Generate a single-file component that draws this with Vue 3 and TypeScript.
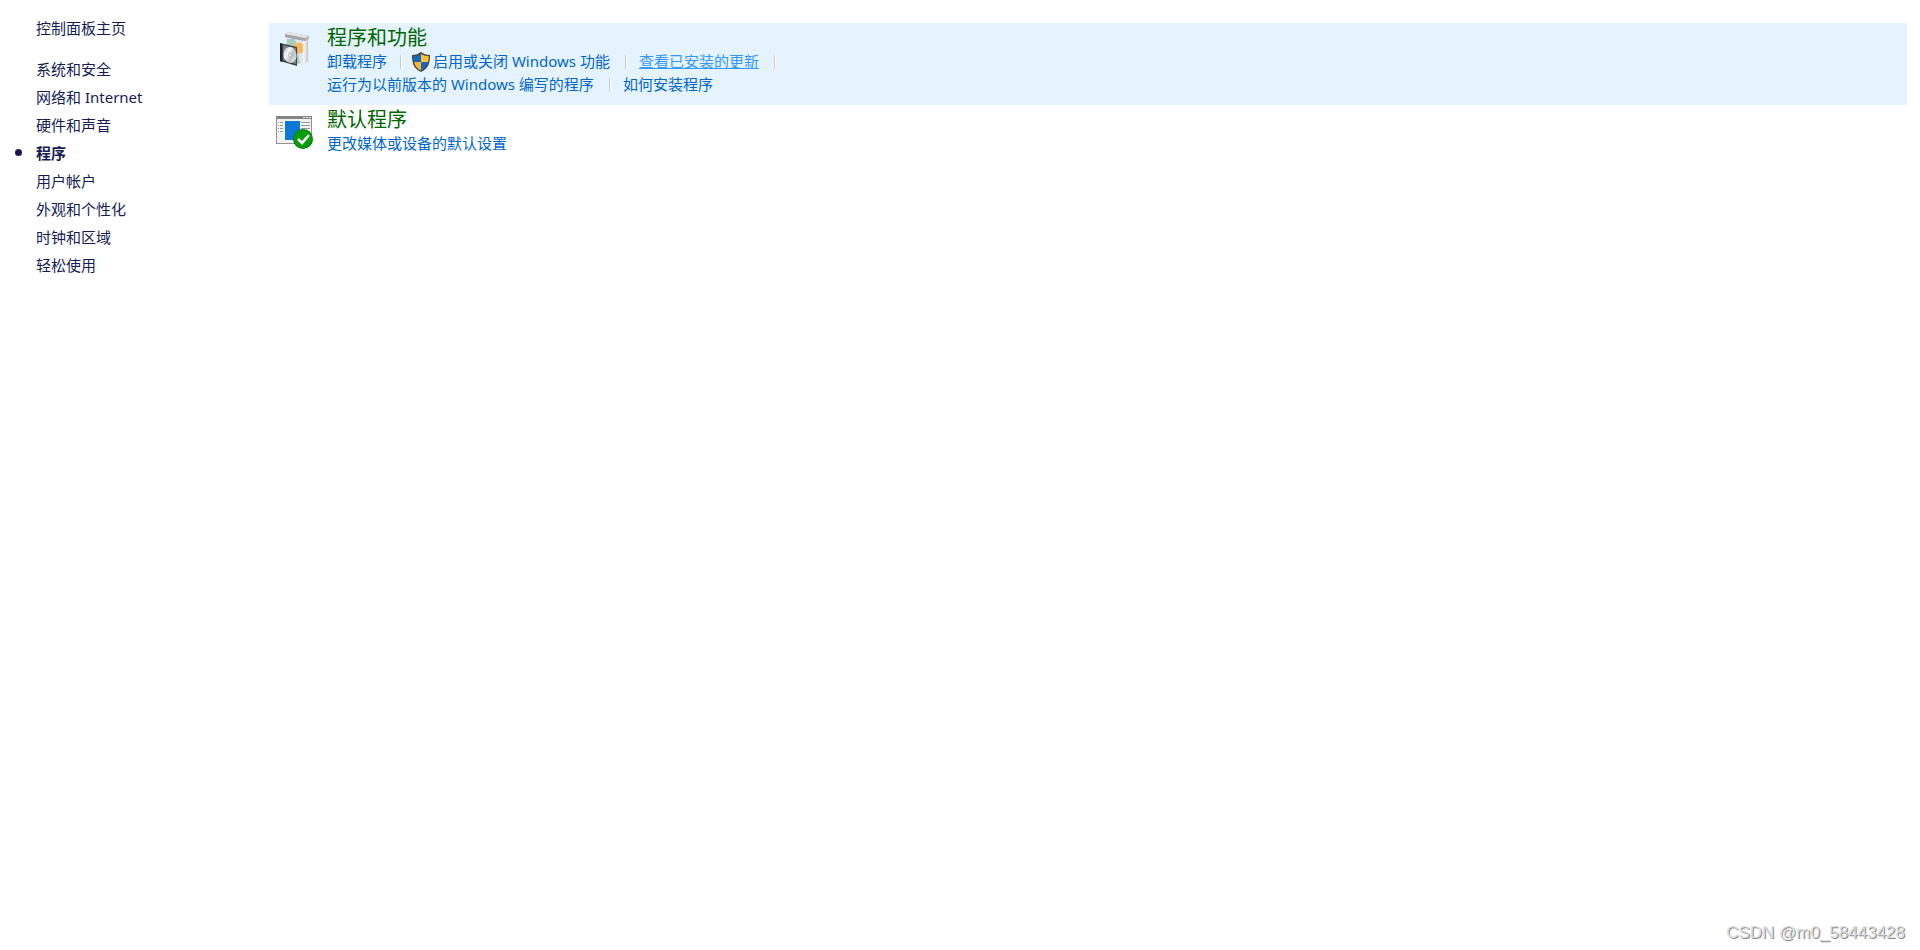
<script setup lang="ts">
interface Category {
  name: string
  current?: boolean
}

interface Task {
  name: string
  shield?: boolean
  hovered?: boolean
}

interface Group {
  title: string
  icon: 'box' | 'defaults'
  active?: boolean
  rows: Task[][]
}

const categories: Category[] = [
  { name: '系统和安全' },
  { name: '网络和 Internet' },
  { name: '硬件和声音' },
  { name: '程序', current: true },
  { name: '用户帐户' },
  { name: '外观和个性化' },
  { name: '时钟和区域' },
  { name: '轻松使用' },
]

const groups: Group[] = [
  {
    title: '程序和功能',
    icon: 'box',
    active: true,
    rows: [
      [
        { name: '卸载程序' },
        { name: '启用或关闭 Windows 功能', shield: true },
        { name: '查看已安装的更新', hovered: true },
      ],
      [{ name: '运行为以前版本的 Windows 编写的程序' }, { name: '如何安装程序' }],
    ],
  },
  {
    title: '默认程序',
    icon: 'defaults',
    rows: [[{ name: '更改媒体或设备的默认设置' }]],
  },
]

function hasDivider(group: Group, row: number, index: number): boolean {
  const lastInRow = index === group.rows[row].length - 1
  const lastRow = row === group.rows.length - 1
  return !(lastInRow && lastRow)
}
</script>

<template>
  <div class="page">
    <nav class="sidebar">
      <a class="home" href="#">控制面板主页</a>
      <ul class="categories">
        <li v-for="c in categories" :key="c.name" :class="{ current: c.current }">
          <a href="#">{{ c.name }}</a>
        </li>
      </ul>
    </nav>

    <main class="content">
      <section v-for="g in groups" :key="g.title" class="group" :class="{ active: g.active }">
        <svg v-if="g.icon === 'box'" class="icon" viewBox="0 0 40 40" aria-hidden="true">
          <defs>
            <linearGradient id="disc" x1="0" y1="0" x2="1" y2="1">
              <stop offset="0" stop-color="#b4b9bc" />
              <stop offset=".35" stop-color="#f4f5f6" />
              <stop offset=".6" stop-color="#bcc1c4" />
              <stop offset="1" stop-color="#f0f2f3" />
            </linearGradient>
            <linearGradient id="panel" x1="0" y1="0" x2="1" y2="0">
              <stop offset="0" stop-color="#fafafa" />
              <stop offset=".6" stop-color="#e2e2e2" />
              <stop offset="1" stop-color="#bdbdbd" />
            </linearGradient>
          </defs>
          <path d="M13 9 31 12v25l-18-4z" fill="#dfe7ec" />
          <path d="M14 11h8l5 24-4 1-9-3z" fill="#a9cdbb" />
          <circle cx="26" cy="20" r="5.500" fill="#f9b75c" />
          <path d="M30 12 35 11v22l-3 4-2-1z" fill="url(#panel)" />
          <path d="M12 6 16 4 36 8v3l-4 2-20-4z" fill="#b5b5b5" />
          <path d="M12 6 32 10v3L12 9z" fill="#a3a4a5" />
          <path d="M12 6 16 4 36 8l-4 2z" fill="#e6e6e6" />
          <path d="M7 15 24 19v19L7 33z" fill="#3a434b" />
          <path d="M10 17 23 20v16l-13-4z" fill="#79838a" />
          <ellipse cx="17" cy="27" rx="6.500" ry="8" fill="url(#disc)" transform="rotate(-12 17 27)" />
          <ellipse cx="17" cy="27" rx="1.500" ry="2" fill="#e9f0f4" stroke="#b4b9bc" />
          <path d="M7 15v18l2 1V16z" fill="#1d2226" />
        </svg>
        <svg v-else class="icon" viewBox="0 0 40 40" aria-hidden="true">
          <path d="M3 6h36v28H3z" fill="#929292" />
          <path d="M4 9h34v24H4z" fill="#f2f2f2" />
          <path d="M3 6h36v3H3z" fill="#858585" />
          <path d="M30 7h2v1h-2zm3 0h2v1h-2zm3 0h2v1h-2z" fill="#eee" />
          <path d="M12 11h15v19H12z" fill="#0b78d8" />
          <path
            d="M5 12.500h1m1 0h3M5 15.500h1m1 0h3M5 18.500h1m1 0h3M5 21.500h1m1 0h3M28 12.500h9M28 15.500h9M28 18.500h9M28 21.500h9"
            stroke="#999"
          />
          <circle cx="30" cy="29" r="10" fill="#087b0c" />
          <circle cx="30" cy="29" r="9" fill="#079d0b" />
          <path d="M25 29l4 4 7-8" fill="none" stroke="#fff" stroke-width="2.6" />
        </svg>

        <div class="body">
          <h2><a href="#">{{ g.title }}</a></h2>
          <div v-for="(row, r) in g.rows" :key="r" class="tasks">
            <template v-for="(t, i) in row" :key="t.name">
              <svg v-if="t.shield" class="shield" viewBox="0 0 20 20" aria-hidden="true">
                <path d="M10 0c3 2 5 3 9 3 0 8-1 13-9 17C2 16 1 11 1 3c4 0 6-1 9-3z" fill="#474747" />
                <path d="M10 2v8H3c-.6-2-.7-3.500-.7-5.700C5 4.200 7 3.500 10 2z" fill="#1568bd" />
                <path d="M10 2v8h7c.6-2 .7-3.500.7-5.700C15 4.200 13 3.500 10 2z" fill="#ffc12e" />
                <path d="M3 10h7v8.500C6 16.500 4 14 3 10z" fill="#ffb52d" />
                <path d="M17 10h-7v8.500c4-2 6-4.500 7-8.500z" fill="#1568bd" />
              </svg>
              <a href="#" :class="{ hovered: t.hovered }">{{ t.name }}</a>
              <span
                v-if="hasDivider(g, r, i)"
                class="divider"
                :class="{ tight: row[i + 1]?.shield }"
              ></span>
            </template>
          </div>
        </div>
      </section>
    </main>

    <footer class="watermark">CSDN @m0_58443428</footer>
  </div>
</template>

<style>
body {
  margin: 0;
  background: #fff;
}
</style>

<style scoped>
.page {
  display: flex;
  box-sizing: border-box;
  min-height: 100vh;
  padding-right: 13px;
  font-family: 'Noto Sans', 'Noto Sans CJK SC', sans-serif;
  font-size: 15px;
  position: relative;
}

a {
  color: inherit;
  text-decoration: none;
}

.sidebar {
  flex: 0 0 269px;
  box-sizing: border-box;
  padding: 14px 0 0 36px;
  color: #151c55;
  line-height: 28px;
}

.home {
  display: block;
}

.categories {
  list-style: none;
  margin: 13px 0 0;
  padding: 0;
}

.current {
  position: relative;
  font-weight: 700;
}

.current::before {
  content: '';
  position: absolute;
  left: -21px;
  top: 10px;
  width: 7px;
  height: 7px;
  border-radius: 50%;
  background: #151c55;
}

.content {
  flex: 1;
  min-width: 0;
  padding-top: 23px;
}

.group {
  display: flex;
  align-items: flex-start;
  padding: 3px 0 9px 4px;
}

.active {
  background: #e5f3ff;
}

.icon {
  flex: none;
  width: 40px;
  height: 40px;
  margin: 2px 14px 0 0;
}

h2 {
  margin: 0;
  color: #006600;
  font-size: 20px;
  font-weight: 400;
  line-height: 24px;
}

.tasks {
  display: flex;
  align-items: center;
  color: #0066cc;
  line-height: 23px;
  height: 23px;
}

.shield {
  flex: none;
  width: 20px;
  height: 20px;
  margin-right: 2px;
}

.hovered {
  color: #3399ff;
  text-decoration: underline;
}

.divider {
  flex: none;
  width: 1px;
  height: 14px;
  margin: 0 12px 0 15px;
  background: #cccccc;
  border-right: 1px solid #fff;
}

.tight {
  margin-left: 13px;
  margin-right: 9px;
}

.watermark {
  position: absolute;
  right: 15px;
  bottom: 7px;
  color: #dcdcdc;
  font-family: 'Liberation Sans', sans-serif;
  font-size: 17px;
  line-height: 20px;
  text-shadow: 1px 1px 0 #8c8c8c;
}
</style>
